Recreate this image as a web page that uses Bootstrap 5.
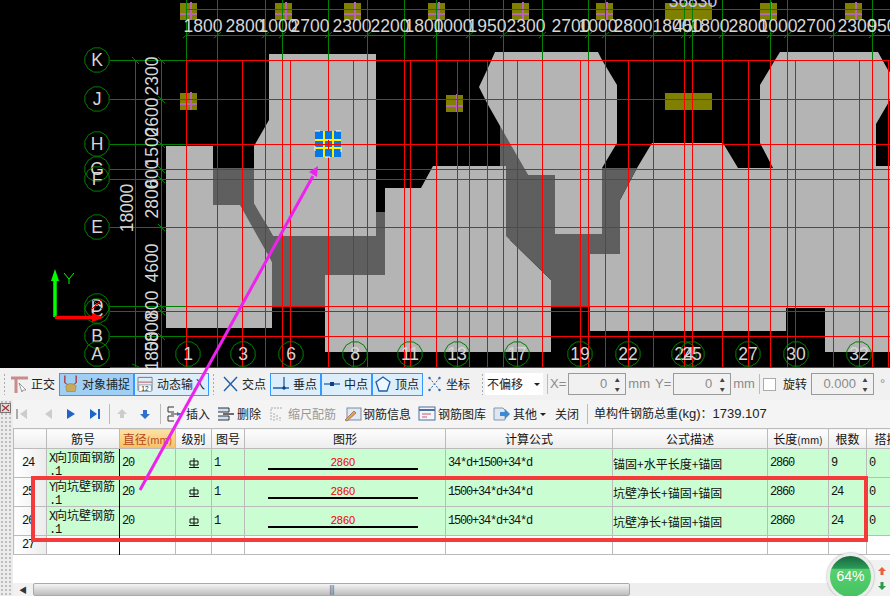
<!DOCTYPE html>
<html lang="zh-CN">
<head>
    <meta charset="UTF-8">
    <meta name="viewport" content="width=device-width, initial-scale=1.0">
    <title>钢筋编辑</title>
    <link href="https://cdn.jsdelivr.net/npm/bootstrap@5.3.0/dist/css/bootstrap.min.css" rel="stylesheet">
    <style>
        html, body { height: 596px; overflow: hidden; background: #fff; }
        body { font-family: "Noto Sans CJK SC", "Liberation Sans", sans-serif; font-size: 12px; color: #222; }
        .page { position: relative; width: 890px; height: 596px; overflow: hidden; }
        .cad { display: block; background: #000; }
        .cad text { font-family: "Liberation Sans", sans-serif; font-size: 17.5px; fill: #d6d6d6; text-anchor: middle; }

        /* spacing the toolbars need, Bootstrap's scale is too coarse here */
        .gl1 { margin-left: 1px; } .gl2 { margin-left: 2px; } .gl3 { margin-left: 3px; } .gl4 { margin-left: 4px; }
        .gl5 { margin-left: 5px; } .gl6 { margin-left: 6px; } .gl7 { margin-left: 7px; } .gl8 { margin-left: 8px; }
        .gl9 { margin-left: 9px; } .gl10 { margin-left: 10px; } .gl11 { margin-left: 11px; } .gl12 { margin-left: 12px; }

        /* toolbars */
        .bar-top { height: 32px; background: #f1f1f1; padding-left: 3px; }
        .bar-top > *, .bar-low > * { flex: none; }
        .grip { width: 3px; height: 22px; background: radial-gradient(circle, #aaa 1px, transparent 1px) 0 0 / 3px 4px; }
        .tool { height: 23px; gap: 3px; padding-left: 2px; white-space: nowrap; }
        .tool-on { border: 1px solid #3399ff; background: #dcedfb; }
        .tool-hot { background: #9fcff5; }
        .sep { width: 1px; height: 20px; background: #bbb; }
        .w47 { width: 47px; } .w51 { width: 51px; } .w75 { width: 75px; }
        .combo { width: 58px; height: 22px; background: #fff; padding-left: 2px; }
        .combo::after, .drop::after { color: #222; border-top-width: 3px; border-right-width: 3px; border-left-width: 3px; }
        .combo::after { margin-left: 11px; }
        .drop::after { margin-left: 3px; }
        .muted-lab { color: #8a8a8a; font-size: 13px; font-family: "Liberation Sans", sans-serif; }
        .spin { width: 58px; height: 22px; border: 1px solid #9a9a9a; background: #f1f1f1; padding-right: 2px; }
        .spin-w { width: 63px; }
        .spin input { width: 38px; border: 0; padding: 0; background: transparent; color: #8a8a8a; text-align: right; font-size: 13px; font-family: "Liberation Sans", sans-serif; }
        .spin-w input { width: 44px; }
        .arrows { width: 12px; margin-left: auto; font-size: 5px; line-height: 9px; color: #444; text-align: center; }
        .chk { width: 13px; height: 13px; border: 1px solid #aaa; background: #fff; }
        .nowrap { white-space: nowrap; }

        .lower { height: 196px; }
        .side { width: 13px; background: #ececec radial-gradient(circle, #bdbdbd 1px, transparent 1.2px) 0 0 / 4px 4px; }
        .close-x { width: 11px; height: 10px; margin-top: 3px; display: block; background: #eee; }
        .bar-low { height: 28px; background: #f4f4f4; padding-left: 2px; white-space: nowrap; }
        .off-txt { color: #999; }
        .lat { font-family: "Liberation Sans", sans-serif; font-size: 13px; }

        /* grid */
        .grid-wrap { width: 877px; height: 155px; overflow: hidden; background: #fff; }
        .rebar { table-layout: fixed; width: 893px; margin: 0; font-size: 12px; --bs-table-border-color: #bbb; border-color: #bbb; }
        .rebar th, .rebar td { padding: 0 2px; vertical-align: middle; overflow: hidden; white-space: nowrap; color: #111; }
        .rebar th { height: 20px; font-weight: 400; text-align: center; background: linear-gradient(#fdfdfd, #ececec); line-height: 1; }
        .rebar td { height: 29px; background: #cbfdd3; line-height: 13px; }
        .rebar tr.blank td { height: 19px; background: #fff; }
        .rebar td.rowh, .rebar tr.blank td.rowh { background: linear-gradient(90deg, #fff, #ececec); padding-left: 8px; }
        .rebar td.cur { border-right: 1px solid #000; }
        .rebar th.hot { background: linear-gradient(#fde3a7, #f6c063); color: #b5451b; }
        .unit { font-size: 10px; }
        .hw { font-family: "Liberation Mono", monospace; letter-spacing: -1.2px; }
        span.hw { line-height: 0; }
        .c1 { width: 33px; } .c2 { width: 73px; } .c3 { width: 56px; } .c4 { width: 36px; } .c5 { width: 33px; }
        .c6 { width: 201px; } .c7 { width: 167px; } .c8 { width: 155px; } .c9 { width: 61px; } .c10 { width: 38px; } .c11 { width: 40px; }
        .shape { width: 150px; margin-left: 21px; border-bottom: 2px solid #000; color: #e00; text-align: center; line-height: 12px; height: 14px; font-family: "Liberation Sans", sans-serif; font-size: 11px; }
        .scroll { height: 13px; background: #eee; margin-top: auto; }
        .scroll-l { width: 20px; background: #f1f1f1; font-size: 8px; color: #333; }
        .scroll-t { width: 597px; border: 1px solid #aaa; border-radius: 2px; background: linear-gradient(#f4f4f4, #bdbdbd); color: #555; font-size: 9px; letter-spacing: -1px; }

        /* things lying over the page */
        .mark-box { position: absolute; left: 31px; top: 476px; width: 837px; height: 66px; border: 4px solid #f43a3a; pointer-events: none; }
        .mark-arrow { position: absolute; left: 0; top: 0; pointer-events: none; }
        .gauge-bg { position: absolute; left: 868px; top: 560px; width: 22px; height: 36px; background: #f1f1f1; }
        .gauge { position: absolute; left: 827px; top: 553px; width: 47px; height: 47px; padding-bottom: 1px; border-radius: 50%; border: 3px solid #ececec; color: #fff; font-size: 14px; font-family: "Liberation Sans", sans-serif; background: linear-gradient(#17683d 0, #2a9a58 30%, #55d16c 32%, #46c264 100%); box-shadow: 0 0 2px #888; }
        .trend { position: absolute; left: 876px; top: 567px; }
    </style>
</head>
<body>
<div class="page">
    <svg id="cad" class="cad" width="890" height="368" viewBox="0 0 890 368"></svg>

    <!-- Snap toolbar -->
    <div class="bar-top d-flex align-items-center">
        <span class="grip"></span>
        <svg class="gl5" width="18" height="18" viewBox="0 0 18 18"><path d="M0 3h17M5 3v15" stroke="#c98c8c" stroke-width="3" fill="none"/><path d="M8 8l7 7-3 0-1 2z" fill="#fff" stroke="#777" stroke-width=".7"/></svg>
        <span class="gl2">正交</span>
        <div class="tool tool-on tool-hot w75 d-flex align-items-center gl4">
            <svg width="17" height="20" viewBox="0 0 18 20"><path d="M3 1v8M15 1v8" stroke="#a33" stroke-width="1.4"/><path d="M3 9l4 2M15 9l-4 2" stroke="#a33"/><path d="M4 12q5-5 11 0l-1 6h-9z" fill="#c9a95a" stroke="#97803a" stroke-width=".6"/></svg>
            <span>对象捕捉</span>
        </div>
        <div class="tool tool-on w75 d-flex align-items-center">
            <svg width="17" height="18" viewBox="0 0 18 18"><path d="M1 2h15M1 7h15" stroke="#b55" fill="none"/><path d="M1 2v14M16 2v14" stroke="#888"/><rect x="2" y="10" width="13" height="7" fill="#fff" stroke="#666" stroke-width=".6"/><text x="8.5" y="16" font-size="7" text-anchor="middle" font-family="Liberation Sans" fill="#222">12</text></svg>
            <span>动态输入</span>
        </div>
        <span class="grip gl3"></span>
        <div class="tool w47 d-flex align-items-center gl5">
            <svg width="17" height="16" viewBox="0 0 17 16"><path d="M2 1l13 14M15 1L2 15" stroke="#1e5fa8" stroke-width="1.4"/></svg>
            <span>交点</span>
        </div>
        <div class="tool tool-on w51 d-flex align-items-center gl3">
            <svg width="17" height="16" viewBox="0 0 17 16"><path d="M0 12h16M11 1v11" stroke="#1e5fa8" stroke-width="1.3"/><circle cx="11" cy="12" r="1.7" fill="#123f7a"/></svg>
            <span>垂点</span>
        </div>
        <div class="tool tool-on w51 d-flex align-items-center">
            <svg width="17" height="16" viewBox="0 0 17 16"><path d="M0 8h16" stroke="#1e5fa8" stroke-width="1.3"/><rect x="6" y="6" width="4" height="4" fill="#123f7a"/></svg>
            <span>中点</span>
        </div>
        <div class="tool tool-on w51 d-flex align-items-center">
            <svg width="17" height="16" viewBox="0 0 17 16"><path d="M8 1l7 5-3 9H4L1 6z" fill="#eef6ff" stroke="#1e5fa8" stroke-width="1.3"/></svg>
            <span>顶点</span>
        </div>
        <div class="tool d-flex align-items-center gl1">
            <svg width="17" height="18" viewBox="0 0 16 18"><path d="M3 3l10 12M13 3L3 15" stroke="#2a6cb5" stroke-dasharray="2 1.5"/><circle cx="3" cy="3" r="1.2" fill="#2a6cb5"/><circle cx="13" cy="3" r="1.2" fill="#2a6cb5"/><circle cx="3" cy="15" r="1.2" fill="#2a6cb5"/><circle cx="13" cy="15" r="1.2" fill="#2a6cb5"/></svg>
            <span>坐标</span>
        </div>
        <span class="grip gl11"></span>
        <div class="combo dropdown-toggle d-flex align-items-center gl1">不偏移</div>
        <span class="sep gl4"></span>
        <span class="muted-lab gl2">X=</span>
        <div class="spin d-flex align-items-center gl2"><input type="text" value="0" aria-label="X"><div class="arrows">▲<br>▼</div></div>
        <span class="muted-lab gl2">mm</span>
        <span class="muted-lab gl5">Y=</span>
        <div class="spin d-flex align-items-center gl2"><input type="text" value="0" aria-label="Y"><div class="arrows">▲<br>▼</div></div>
        <span class="muted-lab gl2">mm</span>
        <span class="sep gl4"></span>
        <span class="chk gl3"></span>
        <span class="gl7 nowrap">旋转</span>
        <div class="spin spin-w d-flex align-items-center gl4"><input type="text" value="0.000" aria-label="旋转"><div class="arrows">▲<br>▼</div></div>
        <span class="muted-lab gl6">°</span>
    </div>

    <div class="lower d-flex">
        <div class="side">
            <svg class="close-x" viewBox="0 0 11 10"><rect x=".5" y=".5" width="10" height="9" fill="#ddd" stroke="#777"/><path d="M2 2l7 6M9 2L2 8" stroke="#a33" stroke-width="1.2"/></svg>
        </div>
        <div class="flex-grow-1 d-flex flex-column">
            <!-- Record toolbar -->
            <div class="bar-low d-flex align-items-center">
                <svg width="14" height="14" viewBox="0 0 14 14"><path d="M2 2v10" stroke="#aaa" stroke-width="2"/><path d="M12 2L5 7l7 5z" fill="#ccc"/></svg>
                <svg class="gl12" width="14" height="14" viewBox="0 0 14 14"><path d="M11 2L4 7l7 5z" fill="#ccc"/></svg>
                <svg class="gl9" width="14" height="14" viewBox="0 0 14 14"><path d="M3 2l8 5-8 5z" fill="#1e63c8"/></svg>
                <svg class="gl10" width="14" height="14" viewBox="0 0 14 14"><path d="M2 2l7 5-7 5z" fill="#1e63c8"/><path d="M11 2v10" stroke="#1e63c8" stroke-width="2"/></svg>
                <span class="sep gl7"></span>
                <svg class="gl5" width="14" height="14" viewBox="0 0 14 14"><path d="M7 2l5 5H9v4H5V7H2z" fill="#ccc"/></svg>
                <svg class="gl9" width="14" height="14" viewBox="0 0 14 14"><path d="M7 12L2 7h3V3h4v4h3z" fill="#2f6fd0"/></svg>
                <span class="sep gl8"></span>
                <svg class="gl5" width="18" height="18" viewBox="0 0 18 18"><path d="M8 2H2v5h6M8 11H2v5h6" stroke="#333" fill="none"/><path d="M5 9h10" stroke="#333"/><path d="M11 7l4 2-4 2z" fill="#2f6fd0"/></svg>
                <span class="gl2">插入</span>
                <svg class="gl7" width="18" height="18" viewBox="0 0 18 18"><path d="M1 3h11v4H1M1 11h11v4H1" stroke="#333" fill="#cfe0f5"/><path d="M6 9h11" stroke="#222" stroke-width="1.3"/></svg>
                <span class="gl2">删除</span>
                <svg class="gl8" width="16" height="18" viewBox="0 0 16 18"><path d="M2 4v12M5 8v8M8 10v6M11 12v4M2 3h12" stroke="#aaa" stroke-dasharray="2 1"/></svg>
                <span class="off-txt gl3">缩尺配筋</span>
                <svg class="gl8" width="18" height="16" viewBox="0 0 18 16"><rect x="3" y="2" width="14" height="12" fill="#dfe8f3" stroke="#7a8ba3"/><path d="M1 14l9-9 2 2-9 8z" fill="#e0a93f" stroke="#a77"/></svg>
                <span class="gl1">钢筋信息</span>
                <svg class="gl7" width="18" height="16" viewBox="0 0 18 16"><rect x="1" y="1" width="16" height="13" fill="#f2f6fb" stroke="#4c6f9e"/><path d="M1 4h16" stroke="#4c6f9e" stroke-width="2"/><path d="M4 8h9M4 11h5" stroke="#c56"/></svg>
                <span class="gl2">钢筋图库</span>
                <svg class="gl7" width="18" height="16" viewBox="0 0 18 16"><path d="M1 2h9l2 2v10H1z" fill="#dfe6ef" stroke="#8496ad"/><path d="M7 6h5V3l5 5-5 5v-3H7z" fill="#3b8ad8"/></svg>
                <span class="drop dropdown-toggle gl2">其他</span>
                <span class="gl9">关闭</span>
                <span class="sep gl8"></span>
                <span class="gl6">单构件钢筋总重<span class="lat">(kg)</span>：<span class="lat">1739.107</span></span>
            </div>

            <!-- Rebar grid -->
            <div class="grid-wrap">
                <table class="table table-bordered rebar">
                    <colgroup>
                        <col class="c1"><col class="c2"><col class="c3"><col class="c4"><col class="c5"><col class="c6"><col class="c7"><col class="c8"><col class="c9"><col class="c10"><col class="c11">
                    </colgroup>
                    <thead>
                        <tr>
                            <th></th><th>筋号</th><th class="hot">直径<span class="unit">(mm)</span></th><th>级别</th><th>图号</th><th>图形</th><th>计算公式</th><th>公式描述</th><th>长度<span class="unit">(mm)</span></th><th>根数</th><th>搭接</th>
                        </tr>
                    </thead>
                    <tbody>
                        <tr>
                            <td class="rowh hw">24</td><td class="cur"><span class="hw">X</span>向顶面钢筋<br><span class="hw">.1</span></td><td class="hw">20</td>
                            <td><svg class="d-block mx-auto" width="10" height="10" viewBox="0 0 10 10"><path d="M1 7V3h8v4H1zM5 0v9M0 9.5h10" stroke="#111" fill="none"/></svg></td>
                            <td class="hw">1</td><td><div class="shape">2860</div></td><td class="hw">34*d+1500+34*d</td><td class="ps-0">锚固+水平长度+锚固</td><td class="hw">2860</td><td class="hw">9</td><td class="hw">0</td>
                        </tr>
                        <tr>
                            <td class="rowh hw">25</td><td class="cur"><span class="hw">Y</span>向坑壁钢筋<br><span class="hw">.1</span></td><td class="hw">20</td>
                            <td><svg class="d-block mx-auto" width="10" height="10" viewBox="0 0 10 10"><path d="M1 7V3h8v4H1zM5 0v9M0 9.5h10" stroke="#111" fill="none"/></svg></td>
                            <td class="hw">1</td><td><div class="shape">2860</div></td><td class="hw">1500+34*d+34*d</td><td class="ps-0">坑壁净长+锚固+锚固</td><td class="hw">2860</td><td class="hw">24</td><td class="hw">0</td>
                        </tr>
                        <tr>
                            <td class="rowh hw">26</td><td class="cur"><span class="hw">X</span>向坑壁钢筋<br><span class="hw">.1</span></td><td class="hw">20</td>
                            <td><svg class="d-block mx-auto" width="10" height="10" viewBox="0 0 10 10"><path d="M1 7V3h8v4H1zM5 0v9M0 9.5h10" stroke="#111" fill="none"/></svg></td>
                            <td class="hw">1</td><td><div class="shape">2860</div></td><td class="hw">1500+34*d+34*d</td><td class="ps-0">坑壁净长+锚固+锚固</td><td class="hw">2860</td><td class="hw">24</td><td class="hw">0</td>
                        </tr>
                        <tr class="blank">
                            <td class="rowh hw">27</td><td class="cur"></td><td></td><td></td><td></td><td></td><td></td><td></td><td></td><td></td><td></td>
                        </tr>
                    </tbody>
                </table>
            </div>

            <div class="scroll d-flex">
                <div class="scroll-l d-flex align-items-center justify-content-center">◀</div>
                <div class="scroll-t d-flex align-items-center justify-content-center">|||</div>
            </div>
        </div>
    </div>

    <!-- Overlays -->
    <div class="mark-box"></div>
    <div class="gauge-bg"></div>
    <svg class="trend" width="12" height="23" viewBox="0 0 12 23"><path d="M6 0l4 4H7.5v4h-3V4H2z" fill="#e8603c"/><path d="M6 23l4-4H7.5v-4h-3v4H2z" fill="#2f9a4d"/></svg>
    <div class="gauge d-flex align-items-center justify-content-center">64%</div>
    <svg class="mark-arrow" width="890" height="596" viewBox="0 0 890 596">
        <path d="M140 490L313 176" stroke="#ee22ee" stroke-width="3" fill="none"/>
        <path d="M318 166l-9 6 8 5z" fill="#ee22ee"/>
    </svg>
</div>

<script src="https://cdn.jsdelivr.net/npm/bootstrap@5.3.0/dist/js/bootstrap.bundle.min.js"></script>
<script>
    // Draw the plan onto the black canvas
    const LIGHT = "#b4b4b4", DARK = "#5f5f5f", GREEN = "#008000", RED = "#ff0000", OLIVE = "#808000", PINK = "#b565b5";
    let s = "";

    function poly(points, fill) { s += `<polygon points="${points}" fill="${fill}"/>`; }
    function line(x1, y1, x2, y2, c, w) { s += `<line x1="${x1}" y1="${y1}" x2="${x2}" y2="${y2}" stroke="${c}" stroke-width="${w || 1}"/>`; }
    function label(x, y, t, fill) { s += `<text x="${x}" y="${y}"${fill ? ` style="fill:${fill}"` : ""}>${t}</text>`; }
    function vlabel(x, y, t) { s += `<text x="${x}" y="${y}" transform="rotate(-90 ${x} ${y})">${t}</text>`; }
    function bubble(cx, cy, t) {
        let p = [];
        for (let i = 0; i < 12; i++) {
            let a = (i + 0.5) * Math.PI / 6;
            p.push((cx + 12.5 * Math.cos(a)).toFixed(1) + "," + (cy + 12.5 * Math.sin(a)).toFixed(1));
        }
        s += `<polygon points="${p.join(" ")}" fill="none" stroke="${GREEN}"/>`;
        label(cx, cy + 6, t);
    }

    // slabs
    poly("166,146 213,146 213,168 254,168 272,262 272,328 166,328", LIGHT);
    poly("325,275 385,275 385,188 421,188 433,166 510,166 510,240 551,280 551,352 325,352", LIGHT);
    poly("590,254 620,254 620,200 637,168 652,143 723,143 738,168 773,168 760,143 760,85 775,60 780,52 878,52 888,70 890,72 890,100 876,124 876,166 890,166 890,352 825,352 825,308 786,308 786,331 590,331", LIGHT);

    // walls
    poly("213,168 254,168 254,203 273,236 376,236 376,212 385,212 385,275 325,275 325,307 272,307 272,262 240,205 213,205", DARK);
    poly("500,125 528,175 555,175 555,234 602,234 602,168 637,168 620,200 620,254 590,254 590,307 551,307 551,280 506,236 506,166 500,166", DARK);

    // upper blocks sit over the walls
    poly("269,54 376,54 376,236 273,236 254,203 254,146 269,120", LIGHT);
    poly("495,52 598,52 602,60 617,85 617,143 605,163 602,168 602,234 555,234 555,175 528,175 487,103 479,87 487,70", LIGHT);

    // columns
    [[180, 3, 17], [275, 3, 17], [344, 3, 17], [428, 3, 17], [512, 3, 17], [596, 3, 17], [665, 3, 47], [760, 3, 17], [845, 3, 17], [180, 93, 17], [446, 95, 17], [665, 93, 47]].forEach(c => {
        s += `<rect x="${c[0]}" y="${c[1]}" width="${c[2]}" height="17" fill="${OLIVE}"/>`;
        if (c[2] == 17) {
            line(c[0] + 11, c[1] - 1, c[0] + 11, c[1] + 17, PINK, 2);
            line(c[0], c[1] + 11, c[0] + 17, c[1] + 11, PINK, 2);
        }
    });

    // axis lines in green
    const topX = [186, 217, 265, 282, 328, 367, 404, 436, 469, 503, 542, 588, 605, 653, 684, 692, 722, 770, 787, 833, 872];
    topX.forEach(x => {
        line(x + .5, 0, x + .5, 60, GREEN);
        line(x - 3, 38, x + 4, 32, GREEN);
    });
    line(186, 9.5, 890, 9.5, GREEN);
    line(186, 35.5, 890, 35.5, GREEN);
    line(135.5, 60, 135.5, 367, GREEN);
    line(161.5, 60, 161.5, 367, GREEN);
    const rowY = [[60, "K"], [99, "J"], [144, "H"], [169, "G"], [179, "F"], [227, "E"], [306, "D"], [311, "C"], [336, "B"]];
    rowY.forEach(r => {
        line(110, r[0] + .5, 186, r[0] + .5, GREEN);
        line(158, r[0] - 3, 165, r[0] + 4, GREEN);
        bubble(97, r[0], r[1]);
    });
    bubble(97, 354, "A");
    line(110, 367.5, 186, 367.5, GREEN);
    line(132, 57, 139, 64, GREEN);
    line(132, 364, 139, 367, GREEN);

    // red grid
    const redX = [186, 217, 242, 265, 282, 290, 328, 353, 367, 404, 410, 436, 457, 469, 487, 503, 517, 542, 580, 588, 605, 628, 653, 684, 692, 722, 748, 770, 787, 795, 833, 859, 872, 888];
    redX.forEach(x => line(x + .5, 60, x + .5, 368, RED));
    [60, 99, 144, 169, 179, 227, 306, 311, 336, 367].forEach(y => line(186, y + .5, 890, y + .5, RED));

    // dimensions
    [[203, 1800], [245, 2800], [278, 1000], [310, 2700], [352, 2300], [390, 2200], [424, 1800], [453, 1000], [487, 1950], [526, 2300], [571, 2700], [598, 1000], [633, 2800], [672, 1800], [688, 450], [710, 1800], [748, 2800], [778, 1000], [816, 2700], [857, 2300], [882, 950]].forEach(d => label(d[0], 32, d[1]));
    label(693, 7, "36830", "#c9c4e8");
    [[76, 2300], [117, 2600], [147, 1500], [174, 600], [199, 2800], [263, 4600], [305, 800], [332, 5800], [351, 1800]].forEach(d => vlabel(158, d[0], d[1]));
    vlabel(133, 208, 18000);

    // bottom axis bubbles
    [[188, 1], [243, 3], [291, 6], [355, 8], [410, 11], [457, 13], [517, 17], [580, 19], [628, 22], [684, 24], [692, 25], [748, 27], [796, 30], [859, 32]].forEach(b => bubble(b[0], 354, b[1]));

    // selected column with grips
    s += `<rect x="315" y="131" width="26" height="26" fill="#0078e8" stroke="#fff" stroke-dasharray="5 16"/>`;
    line(324, 131, 324, 157, "#ffee00", 2); line(333, 131, 333, 157, "#ffee00", 2);
    line(315, 140, 341, 140, "#ffee00", 2); line(315, 148, 341, 148, "#ffee00", 2);
    line(328.5, 140, 328.5, 149, RED, 1); line(315, 144.5, 341, 144.5, RED, 1);

    // UCS icon
    line(55, 317, 55, 280, "#00ff00", 3.5);
    poly("55,269 51,281 59,281", "#00ff00");
    line(55, 317.5, 92, 317.5, RED, 3.5);
    poly("104,317.5 92,313 92,322", RED);
    s += `<path d="M64 273l5 6 5-6M69 279v5" stroke="#00ff00" fill="none"/>`;
    s += `<path d="M92 299l10 10M102 299l-10 10" stroke="${RED}" fill="none"/>`;

    document.getElementById("cad").innerHTML = s;
</script>
</body>
</html>
